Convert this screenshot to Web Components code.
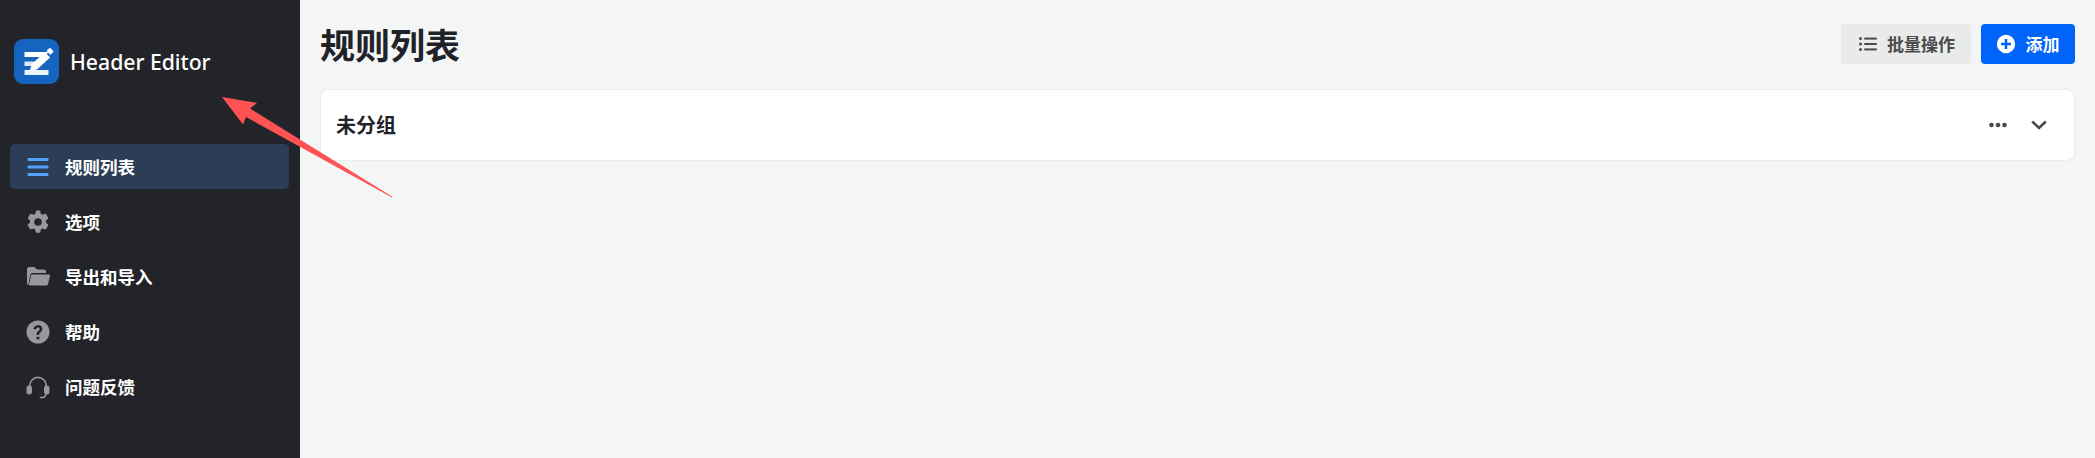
<!DOCTYPE html>
<html lang="zh-CN"><head><meta charset="utf-8"><title>Header Editor</title>
<style>
html,body{margin:0;height:100%;overflow:hidden}
body{font-family:"Noto Sans CJK SC","Noto Sans",sans-serif}
</style></head><body>
<he-app>
  <he-sidebar slot="side">
    <he-nav active label="规则列表"><svg slot="icon" viewBox="0 0 24 24" fill="#53a4f8"><rect x="1.500" y="3" width="21" height="3" rx="1"/><rect x="1.500" y="10.500" width="21" height="3" rx="1"/><rect x="1.500" y="18" width="21" height="3" rx="1"/></svg></he-nav>
    <he-nav label="选项"><svg slot="icon" viewBox="0 0 24 24" fill="#98989c"><path fill-rule="evenodd" d="M14.200 1l.6 2.700c.6.300 1.200.6 1.800 1l2.700-.9q.5-.1.800.3l2.200 3.800q.2.500-.2.800l-2.100 1.900c.1.700.1 1.300 0 2l2.100 1.900q.4.300.2.800l-2.200 3.800q-.3.400-.8.300l-2.700-.9c-.6.400-1.200.7-1.800 1l-.6 2.700q-.1.500-.6.500H10.400q-.5 0-.6-.5l-.6-2.700c-.6-.3-1.200-.6-1.800-1l-2.700.9q-.5.100-.8-.3l-2.200-3.800q-.2-.5.200-.8l2.100-1.900c-.1-.7-.1-1.300 0-2L2.100 8.700q-.4-.3-.2-.8l2.200-3.800q.3-.4.800-.3l2.700.9c.6-.4 1.200-.7 1.800-1L10 1q.1-.5.600-.5h3q.5 0 .6.500zM12 8.200a3.800 3.800 0 1 0 0 7.600 3.800 3.800 0 0 0 0-7.600z"/></svg></he-nav>
    <he-nav label="导出和导入"><svg slot="icon" viewBox="0 0 24 24" fill="#98989c"><path d="M1 19V4.200C1 3 2 2 3.200 2h5.300l2.500 2.500h7c1.200 0 2 .8 2 2V8H6.500c-1 0-1.800.6-2.100 1.500L2.300 19.700C1.600 20 1 19.700 1 19z"/><path d="M6.300 9.500H23c.8 0 1.200.6 1 1.300l-2 8.500c-.2.700-.8 1.200-1.500 1.200H4c-.8 0-1.200-.6-1-1.300l2-8.500c.1-.7.600-1.200 1.300-1.200z"/></svg></he-nav>
    <he-nav label="帮助"><svg slot="icon" viewBox="0 0 24 24" fill="#98989c"><path fill-rule="evenodd" d="M12 .5a11.500 11.500 0 1 1 0 23 11.500 11.500 0 0 1 0-23zM10.600 16.700v2.500h2.800v-2.500zM12 5.200c-2.600 0-4.300 1.400-4.500 3.800l2.600.4c.2-1.300.8-1.900 1.900-1.900 1 0 1.700.6 1.700 1.500 0 .8-.4 1.200-1.300 1.900-1.400 1-1.800 1.800-1.800 3.200v.9h2.600v-.6c0-.8.2-1.100 1.100-1.800 1.300-1 2-1.900 2-3.500 0-2.500-1.800-4.000-4.300-4.000z"/></svg></he-nav>
    <he-nav label="问题反馈"><svg slot="icon" viewBox="0 0 24 24" fill="#98989c"><path d="M3 13V10.500a9 9 0 0 1 18 0V13h-1.700v-2.500a7.300 7.300 0 0 0-14.600 0V13z"/><rect x=".5" y="10.500" width="5.500" height="9" rx="2.700"/><rect x="18" y="10.500" width="5.500" height="9" rx="2.700"/><path d="M20.500 18v1.500c0 2.200-1.600 3.700-3.800 3.700h-3v-1.500h3c1.300 0 2.300-1 2.300-2.200V18z"/></svg></he-nav>
  </he-sidebar>
  <he-page title-text="规则列表">
    <he-button slot="actions" label="批量操作"><svg slot="icon" viewBox="0 0 24 24" fill="#4a4a4a"><circle cx="3" cy="5.500" r="1.800"/><circle cx="3" cy="12" r="1.800"/><circle cx="3" cy="18.500" r="1.800"/><rect x="7.500" y="4.300" width="15" height="2.400"/><rect x="7.500" y="10.800" width="15" height="2.400"/><rect x="7.500" y="17.300" width="15" height="2.400"/></svg></he-button>
    <he-button slot="actions" primary label="添加"><svg slot="icon" viewBox="0 0 24 24"><path fill="#fff" fill-rule="evenodd" d="M12 1a11 11 0 1 1 0 22 11 11 0 0 1 0-22zM10.500 6v4.500H6v3h4.500V18h3v-4.500H18v-3h-4.500V6z"/></svg></he-button>
    <he-group label="未分组"></he-group>
  </he-page>
</he-app>
<he-arrow></he-arrow>
<script>
function def(name, html, init){
  customElements.define(name, class extends HTMLElement{
    constructor(){super();this.attachShadow({mode:'open'}).innerHTML=html;}
    connectedCallback(){ if(init) init(this,this.shadowRoot); }
  });
}
def('he-app',`<style>
:host{display:flex;width:2095px;height:458px;background:#f4f5f5;overflow:hidden}
</style><slot name="side"></slot><slot></slot>`);

def('he-sidebar',`<style>
:host{display:flex;flex-direction:column;flex:0 0 300px;box-sizing:border-box;height:458px;background:#232429;padding:39px 11px 0 10px}
.brand{display:flex;align-items:center;gap:11px;padding-left:4px;height:45px;margin-bottom:60px}
.brand span{font:500 21.200px/47px "Noto Sans",sans-serif;color:#fff;white-space:nowrap}
svg{width:45px;height:45px;display:block;flex:none}
nav{display:flex;flex-direction:column;gap:10px}
</style>
<div class="brand"><svg viewBox="0 0 45 45"><rect width="45" height="45" rx="9" fill="#1565c0"/>
<g fill="#fff"><path d="M10.500 13h24l-4.500 5h-19.500z"/><path d="M10.500 22.500h12l-3.500 4.500h-8.500z" opacity=".85"/><path d="M10.500 31h24v5h-24z" opacity=".92"/>
<path d="M15.500 32l2.500-7 13-12 5 5.500-13 12z"/><path d="M32.500 11.800l2.700-2.500q.8-.7 1.500 0l2.300 2.500q.7.8 0 1.500l-2.700 2.500z"/></g></svg>
<span>Header Editor</span></div><nav><slot></slot></nav>`);

def('he-nav',`<style>
:host{display:flex;align-items:center;box-sizing:border-box;height:45px;border-radius:5px;padding-left:16px;gap:15px;font:700 17.500px/45px "Noto Sans CJK SC",sans-serif;color:#fff}
:host([active]){background:#2c3e55}
::slotted(svg){width:24px;height:24px;flex:none;display:block}
</style><slot name="icon"></slot><span id="t"></span>`,(el,r)=>{r.getElementById('t').textContent=el.getAttribute('label');});

def('he-page',`<style>
:host{display:flex;flex-direction:column;flex:1;min-width:0;box-sizing:border-box;padding:24px 20px 0 20px}
header{display:flex;justify-content:space-between;align-items:center;height:40px;margin-bottom:26px}
h1{margin:0;font:700 35px/40px "Noto Sans CJK SC",sans-serif;color:#1f2329}
.acts{display:flex;gap:10px}
</style><header><h1 id="t"></h1><div class="acts"><slot name="actions"></slot></div></header><slot></slot>`,(el,r)=>{r.getElementById('t').textContent=el.getAttribute('title-text');});

def('he-button',`<style>
:host{display:inline-flex;align-items:center;box-sizing:border-box;height:40px;border-radius:4px;padding:0 16px 0 16.500px;gap:9.500px;font:700 17px/40px "Noto Sans CJK SC",sans-serif;background:#e9ebeb;color:#4a4a4a;white-space:nowrap}
:host([primary]){background:#0064fa;color:#fff;padding:0 15.500px 0 15px}
::slotted(svg){width:20px;height:20px;flex:none;display:block}
</style><slot name="icon"></slot><span id="t"></span>`,(el,r)=>{r.getElementById('t').textContent=el.getAttribute('label');});

def('he-group',`<style>
:host{display:flex;align-items:center;justify-content:space-between;box-sizing:border-box;height:70px;background:#fff;border-radius:7px;box-shadow:0 0 2px rgba(0,0,0,.12);padding:0 27px 0 15px;margin:0 1px}
b{font:700 20px/70px "Noto Sans CJK SC",sans-serif;color:#1f2329}
.r{display:flex;align-items:center;gap:24px}
svg{display:block}
</style><b id="t"></b><div class="r">
<svg width="18" height="6" viewBox="0 0 18 6" fill="#4a4a4a"><circle cx="2.500" cy="3" r="2.300"/><circle cx="9" cy="3" r="2.300"/><circle cx="15.500" cy="3" r="2.300"/></svg>
<svg width="16" height="10" viewBox="0 0 16 10" fill="none" stroke="#4a4a4a" stroke-width="2.500"><path d="M1.200 1.500L8 8l6.800-6.500"/></svg>
</div>`,(el,r)=>{r.getElementById('t').textContent=el.getAttribute('label');});

def('he-arrow',`<style>
:host{position:absolute;left:0;top:0;width:2095px;height:458px;pointer-events:none;display:block}
svg{display:block}
</style><svg width="2095" height="458"><path fill="#ff5252" d="M222 97L257 103 250 108.500 392 196.500 392 197.500 246 117 243 124.500z"/></svg>`);
</script>
</body></html>
